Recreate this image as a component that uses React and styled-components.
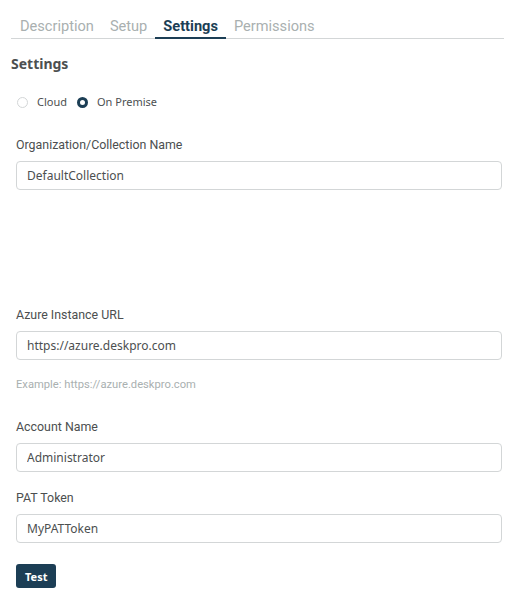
import React from 'react'
import styled, { createGlobalStyle } from 'styled-components'

const GlobalStyle = createGlobalStyle`
  body {
    margin: 0;
    background: #ffffff;
    font-family: "Noto Sans", sans-serif;
    color: #4c4f50;
  }
`

const tabs = ['Description', 'Setup', 'Settings', 'Permissions']

export default function App() {
  return (
    <Page>
      <GlobalStyle />
      <TabBar>
        {tabs.map((t) => (
          <Tab key={t} active={t === 'Settings'}>{t}</Tab>
        ))}
      </TabBar>
      <Heading>Settings</Heading>
      <Form>
        <RadioRow>
          <RadioOption>
            <RadioDot />
            Cloud
          </RadioOption>
          <RadioOption>
            <RadioDot checked />
            On Premise
          </RadioOption>
        </RadioRow>

        <Field>
          <Label>Organization/Collection Name</Label>
          <Input defaultValue="DefaultCollection" />
        </Field>

        <Spacer />

        <Field>
          <Label>Azure Instance URL</Label>
          <Input defaultValue="https://azure.deskpro.com" />
          <Hint>Example: https://azure.deskpro.com</Hint>
        </Field>

        <Field>
          <Label>Account Name</Label>
          <Input defaultValue="Administrator" />
        </Field>

        <Field>
          <Label>PAT Token</Label>
          <Input defaultValue="MyPATToken" />
        </Field>

        <Button>Test</Button>
      </Form>
    </Page>
  )
}

const Page = styled.div`
  width: 493px;
  padding: 0 22px 16px 11px;
`

const TabBar = styled.div`
  display: flex;
  border-bottom: 1px solid #d3d6d7;
  padding-left: 1px;
`

const Tab = styled.div`
  font-family: Roboto, "Noto Sans", sans-serif;
  font-size: 14.6px;
  line-height: 20px;
  font-weight: ${(p) => (p.active ? 700 : 400)};
  color: ${(p) => (p.active ? '#1c3e55' : '#a9b0b0')};
  padding: 16px 8px 1px;
  border-bottom: 2px solid ${(p) => (p.active ? '#1c3e55' : 'transparent')};
  margin-bottom: -1px;
`

const Heading = styled.h2`
  margin: 15px 0 0;
  font-size: 14px;
  line-height: 20px;
  font-weight: 700;
  color: #4c4f50;
`

const Form = styled.div`
  display: flex;
  flex-direction: column;
  align-items: flex-start;
  padding: 0 2px 0 5px;
`

const RadioRow = styled.div`
  display: flex;
  gap: 9px;
  margin: 20px 0 9px;
`

const RadioOption = styled.label`
  display: flex;
  align-items: center;
  gap: 9px;
  font-size: 11px;
  line-height: 16px;
  color: #4c4f50;
`

const RadioDot = styled.span`
  box-sizing: border-box;
  width: 11px;
  height: 11px;
  margin-left: 1px;
  border-radius: 50%;
  border: ${(p) => (p.checked ? '3.5px solid #1c3e55' : '1px solid #d3d6d7')};
  background: #ffffff;
`

const Field = styled.div`
  display: flex;
  flex-direction: column;
  align-self: stretch;
  margin-top: 18px;
`

const Label = styled.div`
  font-family: Roboto, "Noto Sans", sans-serif;
  font-size: 12.4px;
  line-height: 16px;
  color: #4c4f50;
  margin-bottom: 8px;
`

const Input = styled.input`
  box-sizing: border-box;
  height: 29px;
  width: 100%;
  border: 1px solid #d3d6d7;
  border-radius: 4px;
  padding: 0 10px;
  font-family: "Noto Sans", sans-serif;
  font-size: 12px;
  color: #4c4f50;
  outline: none;
`

const Hint = styled.div`
  font-family: Roboto, "Noto Sans", sans-serif;
  font-size: 11.2px;
  line-height: 14px;
  color: #a9b0b0;
  margin: 18px 0 9px;
`

const Spacer = styled.div`
  height: 99px;
`

const Button = styled.button`
  margin-top: 21px;
  height: 24px;
  padding: 0 9px;
  border: none;
  border-radius: 3px;
  background: #1c3e55;
  color: #ffffff;
  font-family: "Noto Sans", sans-serif;
  font-size: 11px;
  font-weight: 700;
`
